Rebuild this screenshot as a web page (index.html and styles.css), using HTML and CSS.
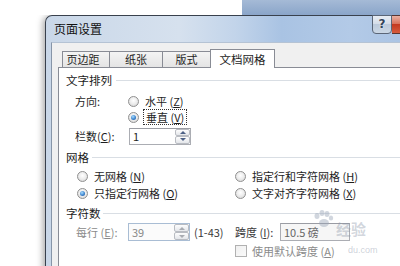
FILE: index.html
```html
<!DOCTYPE html>
<html lang="zh-CN">
<head>
<meta charset="utf-8">
<title>页面设置</title>
<link rel="stylesheet" href="styles.css">
</head>
<body>
<div class="screen">
  <div class="desk"><div class="desk-white"></div><div class="desk-blue"></div></div>
  <div class="dialog">
    <div class="titlebar">
      <span class="title">页面设置</span>
      <div class="btn-help">?</div>
      <div class="btn-close"></div>
    </div>
    <div class="body">
      <div class="client">
        <div class="tabs">
          <div class="tab t1">页边距</div>
          <div class="tab t2">纸张</div>
          <div class="tab t3">版式</div>
          <div class="tab t4 sel">文档网格</div>
        </div>
        <div class="panel">
          <div class="ghead g1"><span>文字排列</span><i class="rule"></i></div>
          <div class="row r-dir">
            <span class="lbl l-dir">方向:</span>
            <span class="opt"><span class="radio"></span>水平 (<u>Z</u>)</span>
          </div>
          <div class="row r-vert">
            <span class="opt"><span class="radio on"></span><span class="focus">垂直 (<u>V</u>)</span></span>
          </div>
          <div class="row r-cols">
            <span class="lbl l-cols">栏数(<u>C</u>):</span>
            <div class="field f-cols"><span class="val">1</span><div class="spin"><b class="up"></b><b class="dn"></b></div></div>
          </div>
          <div class="ghead g2"><span>网格</span><i class="rule"></i></div>
          <div class="row r-grid1">
            <span class="opt c1"><span class="radio"></span>无网格 (<u>N</u>)</span>
            <span class="opt"><span class="radio"></span>指定行和字符网格 (<u>H</u>)</span>
          </div>
          <div class="row r-grid2">
            <span class="opt c1"><span class="radio on"></span>只指定行网格 (<u>O</u>)</span>
            <span class="opt"><span class="radio"></span>文字对齐字符网格 (<u>X</u>)</span>
          </div>
          <div class="ghead g3"><span>字符数</span><i class="rule"></i></div>
          <div class="row r-chars">
            <span class="lbl l-chars dis">每行 (<u>E</u>):</span>
            <div class="field f-chars dis"><span class="val">39</span><div class="spin"><b class="up"></b><b class="dn"></b></div></div>
            <span class="range">(1-43)</span>
            <span class="lbl l-span">跨度 (<u>I</u>):</span>
            <div class="field f-span"><span class="val">10.5 磅</span></div>
          </div>
          <div class="row r-check">
            <span class="check"></span><span class="dis">使用默认跨度 (<u>A</u>)</span>
          </div>
          <div class="ghead g4"><span>行数</span><i class="rule"></i></div>
        </div>
      </div>
    </div>
  </div>
  <div class="watermark">
    <svg class="paw" width="22" height="18" viewBox="0 0 22 18"><g fill="#9aa6b8"><ellipse cx="5" cy="6" rx="2.5" ry="3"/><ellipse cx="10" cy="3" rx="2.5" ry="3"/><ellipse cx="15" cy="4" rx="2.5" ry="3"/><ellipse cx="19" cy="8" rx="2.2" ry="2.6"/><ellipse cx="12" cy="13" rx="5" ry="4"/></g></svg>
    <span class="wm-text">经验</span>
    <span class="wm-url">du.com</span>
  </div>
</div>
</body>
</html>
```

FILE: styles.css
```css
html, body { margin: 0; padding: 0; }
body {
  font-family: "Noto Sans CJK SC", "Liberation Sans", sans-serif;
  font-size: 11px;
  color: #1e1e1e;
  background: #fff;
}
u { text-decoration: underline; }
.screen {
  width: 400px;
  height: 266px;
  overflow: hidden;
  background: #fff;
  position: relative;
}
.desk { display: flex; height: 15px; }
.desk-white { width: 242px; background: #fff; }
.desk-blue { flex: 1; background: linear-gradient(#a5bad6, #8aa5c9); }

.dialog {
  margin-left: 45px;
  width: 380px;
  height: 260px;
  border: 1px solid #39414d;
  border-right: none;
  border-bottom: none;
  border-top-left-radius: 7px;
  background: linear-gradient(90deg, #c9d7e8 0%, #d6e1ee 35%, #c2d4ea 50%, #a9c3e3 62%, #b3cae7 80%, #a7c1e2 100%);
  box-shadow: -2px 1px 7px rgba(0,0,0,0.35);
}
.titlebar { display: flex; height: 26px; align-items: flex-start; }
.title {
  flex: 0 0 326px;
  box-sizing: border-box;
  padding-left: 8px;
  line-height: 26px;
  font-size: 12px;
  color: #111;
}
.btn-help {
  width: 25px;
  height: 19px;
  box-sizing: border-box;
  margin-top: -1px;
  border: 1px solid #5b6677;
  border-radius: 0 0 4px 4px;
  background: linear-gradient(#e8edf4 0%, #d5dde8 45%, #bccadb 50%, #cbd7e5 100%);
  font: bold 12px "DejaVu Sans", sans-serif;
  color: #33445a;
  text-align: center;
  line-height: 17px;
  text-shadow: 0 0 2px #fff;
}
.btn-close {
  width: 43px;
  height: 19px;
  box-sizing: border-box;
  margin-top: -1px;
  border: 1px solid #5a3631;
  border-left: none;
  background: linear-gradient(#eab0a2 0%, #d9735c 45%, #c43a20 50%, #d65c3d 100%);
}
.body { display: flex; padding-left: 5px; height: 234px; }
.client {
  flex: 1;
  background: #f0f0f0;
  border-left: 1px solid #8795a8;
  border-top: 1px solid #b5c3d4;
  padding: 6px 0 0 6px;
}
.tabs { display: flex; align-items: flex-end; height: 18px; padding-left: 4px; }
.tab {
  height: 16px;
  box-sizing: border-box;
  border: 1px solid #898c95;
  border-bottom: none;
  margin-left: -1px;
  background: linear-gradient(#f4f4f4, #e4e4e4);
  text-align: center;
  line-height: 15px;
  color: #1e1e1e;
}
.tab.t1 { width: 48px; margin-left: 0; padding-right: 6px; }
.tab.t2 { width: 54px; }
.tab.t3 { width: 49px; }
.tab.t4 { width: 65px; }
.tab.sel {
  height: 19px;
  background: #fff;
  margin-bottom: -1px;
  position: relative;
  z-index: 1;
  line-height: 19px;
  font-size: 11.5px;
}
.panel {
  background: #fff;
  border: 1px solid #898c95;
  border-right: none;
  height: 220px;
  padding-left: 7px;
  overflow: hidden;
}
.ghead { display: flex; align-items: center; height: 14px; line-height: 14px; }
.ghead span { font-size: 11.5px; color: #1a1a1a; }
.rule { flex: 1; height: 1px; background: #d9dee4; margin-left: 4px; }
.g1 { margin-top: 5px; }
.g2 { margin-top: 5px; }
.g2 .rule { margin-left: 3px; }
.g3 { margin-top: 5px; }
.g3 .rule { margin-left: 2px; }
.g4 { margin-top: 6px; }

.row { display: flex; align-items: center; }
.lbl { flex: none; }
.opt { display: flex; align-items: center; flex: none; }
.radio {
  width: 11px;
  height: 11px;
  box-sizing: border-box;
  border-radius: 50%;
  border: 1px solid #909090;
  background: radial-gradient(circle at 50% 40%, #ffffff 0%, #ececec 50%, #cfcfcf 100%);
  margin-right: 6px;
  display: flex;
  align-items: center;
  justify-content: center;
  flex: none;
}
.radio.on::after {
  content: "";
  width: 5px;
  height: 5px;
  border-radius: 50%;
  background: radial-gradient(circle at 40% 35%, #a9ddff 0%, #3f86cf 55%, #14488f 100%);
}
.focus { outline: 1px dotted #333; outline-offset: 1px; padding: 0 1px; line-height: 12px; }

.r-dir { height: 16px; margin-top: 6px; padding-left: 9px; }
.l-dir { width: 53px; }
.r-vert { height: 16px; padding-left: 62px; }
.r-cols { height: 18px; margin-top: 2px; padding-left: 9px; }
.l-cols { width: 54px; }

.r-grid1 { height: 16px; margin-top: 4px; padding-left: 11px; }
.r-grid2 { height: 16px; margin-top: 1px; padding-left: 11px; }
.c1 { width: 158px; }

.r-chars { height: 18px; margin-top: 3px; padding-left: 10px; }
.l-chars { width: 52px; }
.range { width: 41px; margin-left: 4px; flex: none; color: #3a3a3a; }
.l-span { width: 45px; color: #3a3a3a; }
.r-check { height: 16px; margin-top: 2px; padding-left: 169px; }
.dis { color: #8a8a8a; }

.field {
  height: 18px;
  box-sizing: border-box;
  border: 1px solid #abadb3;
  border-top-color: #9a9ca3;
  background: #fff;
  display: flex;
  align-items: center;
  flex: none;
}
.field .val { flex: 1; padding-left: 3px; line-height: 14px; }
.f-cols { width: 62px; height: 17px; }
.f-chars { width: 62px; border-color: #a9bdd4; background: #fbfbfb; }
.f-chars .val { color: #8a8a8a; }
.f-span { width: 70px; background: #f6f6f6; }
.f-span .val { color: #666; }
.spin {
  width: 15px;
  height: 100%;
  display: flex;
  flex-direction: column;
  box-sizing: border-box;
}
.spin b {
  flex: 1;
  box-sizing: border-box;
  border: 1px solid #b9bcc2;
  border-radius: 2px;
  background: linear-gradient(#fdfdfd, #e4e6ea);
  display: flex;
  align-items: center;
  justify-content: center;
}
.spin b::after {
  content: "";
  width: 0;
  height: 0;
  border-left: 3px solid transparent;
  border-right: 3px solid transparent;
}
.spin .up::after { border-bottom: 3px solid #4d6185; }
.spin .dn::after { border-top: 3px solid #4d6185; }
.f-chars .spin .up::after { border-bottom-color: #a9acb2; }
.f-chars .spin .dn::after { border-top-color: #a9acb2; }

.check {
  width: 12px;
  height: 12px;
  box-sizing: border-box;
  border: 1px solid #b1b1b1;
  background: linear-gradient(135deg, #f0f0f0, #fafafa);
  margin-right: 5px;
  flex: none;
}

.watermark { position: absolute; left: 0; top: 0; width: 400px; height: 266px; pointer-events: none; }
.paw { position: absolute; left: 312px; top: 210px; opacity: 0.45; }
.wm-text { position: absolute; left: 336px; top: 221px; font-size: 15px; line-height: 15px; font-weight: bold; color: rgba(140,150,168,0.4); }
.wm-url { position: absolute; left: 348px; top: 246px; font-size: 9px; line-height: 9px; color: rgba(140,150,168,0.45); font-family: "Liberation Sans", sans-serif; }
```
